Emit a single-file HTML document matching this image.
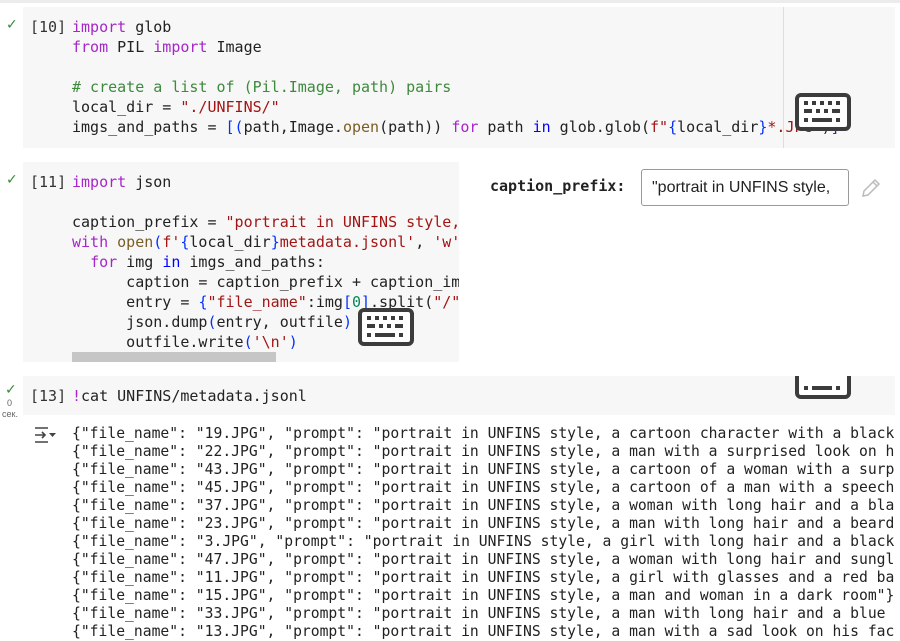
<!DOCTYPE html>
<html><head><meta charset="utf-8"><style>
*{margin:0;padding:0;box-sizing:border-box}
body{width:900px;height:628px;overflow:hidden;background:#fff;position:relative;font-family:"DejaVu Sans Mono","Liberation Mono",monospace}
.bg{position:absolute;background:#f7f7f7}
.code{position:absolute;font-size:15px;line-height:20px;white-space:pre;color:#222}
.out{position:absolute;left:72px;top:425px;font-size:14.7px;line-height:18px;white-space:pre;color:#222}
.k{color:#a626c8}.s{color:#a31515}.c{color:#3d8a3d}.f{color:#795e26}.b{color:#0431fa}.n{color:#0000ff}.num{color:#098658}
.num2{position:absolute;font-size:15px;color:#333;line-height:20px}
.chk{position:absolute;color:#3a8a3a;font-family:"DejaVu Sans",sans-serif;font-size:14px}
.kb{position:absolute}
</style></head><body>
<div style="position:absolute;left:0;top:0;width:900px;height:3px;background:#ececec"></div>
<div class="bg" style="left:23px;top:7px;width:872px;height:141px"></div>
<div style="position:absolute;left:783px;top:7px;width:1px;height:141px;background:#ddd"></div>
<div class="chk" style="left:6px;top:17px">✓</div>
<div class="num2" style="left:30px;top:17px">[10]</div>
<div class="code" style="left:72px;top:17px"><span class="k">import</span> glob
<span class="k">from</span> PIL <span class="k">import</span> Image

<span class="c"># create a list of (Pil.Image, path) pairs</span>
local_dir = <span class="s">"./UNFINS/"</span>
imgs_and_paths = <span class="b">[(</span>path,Image.<span class="f">open</span>(path)) <span class="k">for</span> path <span class="n">in</span> glob.glob(<span class="s">f"</span><span class="b">{</span>local_dir<span class="b">}</span><span class="s">*.JPG"</span>)<span class="b">]</span></div>
<svg class="kb" style="left:795px;top:93px" width="56" height="38" viewBox="0 0 56 38"><rect x="2" y="2" width="52" height="34" rx="4" fill="#fff" stroke="#3c3c3c" stroke-width="4"/><g fill="#3c3c3c"><rect x="9" y="8" width="4" height="4"/><rect x="17" y="8" width="4" height="4"/><rect x="25" y="8" width="4" height="4"/><rect x="33" y="8" width="4" height="4"/><rect x="41" y="8" width="4" height="4"/><rect x="9" y="16" width="8" height="4"/><rect x="21" y="16" width="4" height="4"/><rect x="29" y="16" width="4" height="4"/><rect x="37" y="16" width="8" height="4"/><rect x="9" y="25" width="4" height="4"/><rect x="17" y="25" width="20" height="4"/><rect x="41" y="25" width="4" height="4"/></g></svg>

<div class="bg" style="left:23px;top:162px;width:436px;height:200px"></div>
<div class="chk" style="left:6px;top:172px">✓</div>
<div class="num2" style="left:30px;top:172px">[11]</div>
<div style="position:absolute;left:23px;top:162px;width:436px;height:200px;overflow:hidden">
<div class="code" style="left:49px;top:10px"><span class="k">import</span> json

caption_prefix = <span class="s">"portrait in UNFINS style, "</span>
<span class="k">with</span> <span class="f">open</span><span class="b">(</span><span class="s">f'</span><span class="b">{</span>local_dir<span class="b">}</span><span class="s">metadata.jsonl'</span>, <span class="s">'w'</span>) <span class="k">as</span> outfile:
  <span class="k">for</span> img <span class="n">in</span> imgs_and_paths:
      caption = caption_prefix + caption_img
      entry = <span class="b">{</span><span class="s">"file_name"</span>:img<span class="b">[</span><span class="num">0</span><span class="b">]</span>.split(<span class="s">"/"</span>)
      json.dump<span class="b">(</span>entry, outfile<span class="b">)</span>
      outfile.write<span class="b">(</span><span class="s">'\n'</span><span class="b">)</span></div>
</div>
<div style="position:absolute;left:72px;top:352px;width:204px;height:10px;background:#c6c6c6"></div>
<svg class="kb" style="left:358px;top:308px" width="56" height="38" viewBox="0 0 56 38"><rect x="2" y="2" width="52" height="34" rx="4" fill="#fff" stroke="#3c3c3c" stroke-width="4"/><g fill="#3c3c3c"><rect x="9" y="8" width="4" height="4"/><rect x="17" y="8" width="4" height="4"/><rect x="25" y="8" width="4" height="4"/><rect x="33" y="8" width="4" height="4"/><rect x="41" y="8" width="4" height="4"/><rect x="9" y="16" width="8" height="4"/><rect x="21" y="16" width="4" height="4"/><rect x="29" y="16" width="4" height="4"/><rect x="37" y="16" width="8" height="4"/><rect x="9" y="25" width="4" height="4"/><rect x="17" y="25" width="20" height="4"/><rect x="41" y="25" width="4" height="4"/></g></svg>

<div style="position:absolute;left:490px;top:177px;font-size:15px;font-weight:bold;color:#222">caption_prefix:</div>
<div style="position:absolute;left:641px;top:169px;width:208px;height:37px;border:1px solid #999;border-radius:3px;background:#fff;overflow:hidden;font-family:'Liberation Sans',sans-serif;font-size:16px;line-height:35px;padding-left:10px;white-space:nowrap;color:#222">"portrait in UNFINS style, </div>
<svg style="position:absolute;left:860px;top:177px" width="22" height="22" viewBox="0 0 22 22"><path d="M3 19 L4 14 L15 3 L19 7 L8 18 Z M13 5 L17 9" fill="none" stroke="#bbb" stroke-width="1.5"/></svg>

<div class="bg" style="left:23px;top:376px;width:872px;height:39px"></div>
<div class="chk" style="left:5px;top:382px">✓</div>
<div style="position:absolute;left:7px;top:398px;font-family:'Liberation Sans',sans-serif;font-size:9px;color:#666">0</div>
<div style="position:absolute;left:2px;top:409px;font-family:'Liberation Sans',sans-serif;font-size:9px;color:#666">сек.</div>
<div class="num2" style="left:30px;top:386px">[13]</div>
<div class="code" style="left:72px;top:386px"><span class="k">!</span>cat UNFINS/metadata.jsonl</div>
<div style="position:absolute;left:795px;top:376px;width:56px;height:23px;overflow:hidden"><svg style="position:absolute;top:-15px" width="56" height="38" viewBox="0 0 56 38"><rect x="2" y="2" width="52" height="34" rx="4" fill="#fff" stroke="#3c3c3c" stroke-width="4"/><g fill="#3c3c3c"><rect x="9" y="25" width="4" height="4"/><rect x="17" y="25" width="20" height="4"/><rect x="41" y="25" width="4" height="4"/></g></svg></div>

<svg style="position:absolute;left:33px;top:426px" width="24" height="18" viewBox="0 0 24 18"><path d="M2 2 H15 M2 16 H15 M2 9 H12 M9 6 L12 9 L9 12" fill="none" stroke="#444" stroke-width="1.6"/><path d="M16 7 L23 7 L19.5 11 Z" fill="#444"/></svg>
<div class="out">{"file_name": "19.JPG", "prompt": "portrait in UNFINS style, a cartoon character with a black
{"file_name": "22.JPG", "prompt": "portrait in UNFINS style, a man with a surprised look on h
{"file_name": "43.JPG", "prompt": "portrait in UNFINS style, a cartoon of a woman with a surp
{"file_name": "45.JPG", "prompt": "portrait in UNFINS style, a cartoon of a man with a speech
{"file_name": "37.JPG", "prompt": "portrait in UNFINS style, a woman with long hair and a bla
{"file_name": "23.JPG", "prompt": "portrait in UNFINS style, a man with long hair and a beard
{"file_name": "3.JPG", "prompt": "portrait in UNFINS style, a girl with long hair and a black
{"file_name": "47.JPG", "prompt": "portrait in UNFINS style, a woman with long hair and sungl
{"file_name": "11.JPG", "prompt": "portrait in UNFINS style, a girl with glasses and a red ba
{"file_name": "15.JPG", "prompt": "portrait in UNFINS style, a man and woman in a dark room"}
{"file_name": "33.JPG", "prompt": "portrait in UNFINS style, a man with long hair and a blue 
{"file_name": "13.JPG", "prompt": "portrait in UNFINS style, a man with a sad look on his fac</div>
</body></html>
